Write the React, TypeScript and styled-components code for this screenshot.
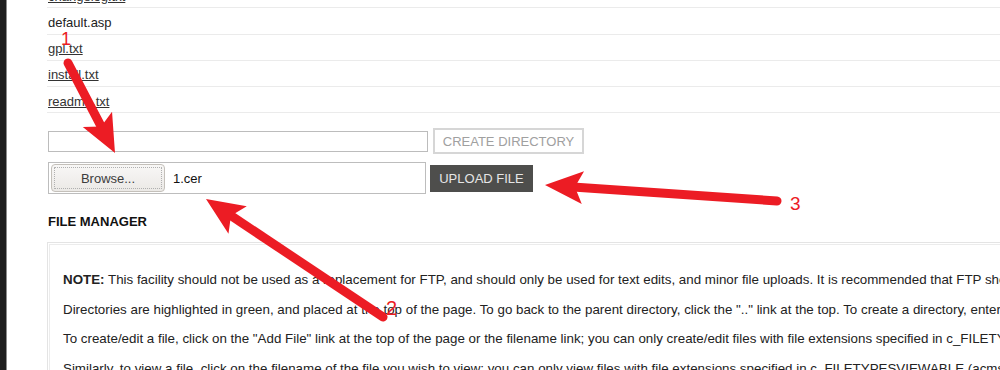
import React from "react";
import styled, { createGlobalStyle } from "styled-components";

const Global = createGlobalStyle`
  html, body { margin: 0; padding: 0; background: #fff; overflow: hidden; }
  body {
    font-family: "Liberation Sans", Arial, sans-serif;
    font-size: 13px;
    color: #222;
  }
`;

const Page = styled.div`
  position: relative;
  width: 1000px;
  height: 370px;
  overflow: hidden;
  display: flex;
  background: #fff;
`;

const Sidebar = styled.div`
  width: 6px;
  flex: none;
  background: #1e1e1e;
  border-right: 1px solid #8c8c8c;
`;

const Main = styled.div`
  flex: 1;
  min-width: 0;
  padding-left: 40px;
  margin-top: -18px;
  display: flex;
  flex-direction: column;
`;

const FileList = styled.div`
  display: flex;
  flex-direction: column;
`;

const FileRow = styled.div`
  height: 21.25px;
  padding-top: 4px;
  border-bottom: 1px solid #ebebeb;
  display: flex;
  align-items: center;
  padding-left: 1px;
  line-height: 16px;
`;

const FileLink = styled.a`
  color: #333;
  text-decoration: underline;
`;

const FileName = styled.span`
  color: #222;
`;

const FormRow = styled.div<{ $gap: number; $top: number; $h: number }>`
  display: flex;
  align-items: center;
  gap: ${(p) => p.$gap}px;
  margin-top: ${(p) => p.$top}px;
  height: ${(p) => p.$h}px;
`;

const DirInput = styled.div`
  width: 380px;
  height: 21px;
  box-sizing: border-box;
  border: 1px solid #bcbcbc;
  margin-left: 1px;
`;

const GhostButton = styled.button`
  width: 151px;
  height: 26px;
  box-sizing: border-box;
  border: 2px solid #d6d6d6;
  background: #fff;
  color: #a0a0a0;
  font-family: "Liberation Sans", Arial, sans-serif;
  font-size: 13px;
  padding: 0;
`;

const FileBox = styled.div`
  width: 378px;
  height: 32px;
  box-sizing: border-box;
  border: 1px solid #bdbdbd;
  margin-left: 1px;
  display: flex;
  align-items: center;
  padding: 1px 2px;
  gap: 8px;
`;

const BrowseButton = styled.div`
  width: 114px;
  height: 28px;
  box-sizing: border-box;
  border: 1px solid #c4c0ba;
  border-radius: 4px;
  background: linear-gradient(#f8f7f6, #ebe9e6);
  display: flex;
  align-items: center;
  justify-content: center;
  color: #3c3c3c;
  font-size: 13px;
  outline: 1px dotted #b0b0b0;
  outline-offset: -4px;
`;

const ChosenFile = styled.span`
  color: #111;
  font-size: 13px;
`;

const DarkButton = styled.button`
  width: 103px;
  height: 27px;
  border: none;
  background: #4e4e4c;
  color: #e6e6e6;
  font-family: "Liberation Sans", Arial, sans-serif;
  font-size: 13px;
  padding: 0;
`;

const Title = styled.h3`
  margin: 19.5px 0 0;
  padding-left: 1px;
  font-size: 13px;
  line-height: 16px;
  font-weight: bold;
  color: #111;
`;

const NoteBox = styled.div`
  margin-top: 12.5px;
  border: 1px solid #e4e4e4;
  border-right: none;
  padding: 1px 0 0 1px;
`;

const NoteInner = styled.div`
  border: 1px solid #ececec;
  border-right: none;
  padding: 27px 0 0 13px;
  white-space: nowrap;
`;

const Note = styled.p`
  margin: 0 0 13.5px;
  line-height: 16px;
  font-size: 13.35px;
  color: #222;
`;

const Overlay = styled.svg`
  position: absolute;
  left: 0;
  top: 0;
  width: 1000px;
  height: 370px;
  pointer-events: none;
`;

const RED = "#ec1c24";

type Pt = [number, number];

function Arrow({ tail, tip }: { tail: Pt; tip: Pt }) {
  const dx = tail[0] - tip[0];
  const dy = tail[1] - tip[1];
  const len = Math.hypot(dx, dy);
  const ux = dx / len;
  const uy = dy / len;
  const px = -uy;
  const py = ux;
  const headLen = 38;
  const half = 16.5;
  const notch = 30;
  const bx = tip[0] + ux * headLen;
  const by = tip[1] + uy * headLen;
  const nx = tip[0] + ux * notch;
  const ny = tip[1] + uy * notch;
  const pts = [
    [tip[0], tip[1]],
    [bx + px * half, by + py * half],
    [nx, ny],
    [bx - px * half, by - py * half],
  ]
    .map((p) => p.join(","))
    .join(" ");
  return (
    <g>
      <line
        x1={tail[0]}
        y1={tail[1]}
        x2={tip[0] + ux * (notch - 2)}
        y2={tip[1] + uy * (notch - 2)}
        stroke={RED}
        strokeWidth={9}
        strokeLinecap="round"
      />
      <polygon points={pts} fill={RED} />
    </g>
  );
}

export default function App() {
  return (
    <>
      <Global />
      <Page>
        <Sidebar />
        <Main>
          <FileList>
            <FileRow>
              <FileLink href="#">changelog.txt</FileLink>
            </FileRow>
            <FileRow>
              <FileName>default.asp</FileName>
            </FileRow>
            <FileRow>
              <FileLink href="#">gpl.txt</FileLink>
            </FileRow>
            <FileRow>
              <FileLink href="#">install.txt</FileLink>
            </FileRow>
            <FileRow>
              <FileLink href="#">readme.txt</FileLink>
            </FileRow>
          </FileList>

          <FormRow $gap={5} $top={15} $h={26}>
            <DirInput />
            <GhostButton>CREATE DIRECTORY</GhostButton>
          </FormRow>

          <FormRow $gap={4} $top={8} $h={32}>
            <FileBox>
              <BrowseButton>Browse...</BrowseButton>
              <ChosenFile>1.cer</ChosenFile>
            </FileBox>
            <DarkButton>UPLOAD FILE</DarkButton>
          </FormRow>

          <Title>FILE MANAGER</Title>

          <NoteBox>
            <NoteInner>
              <Note>
                <b>NOTE:</b> This facility should not be used as a replacement for FTP, and should only be used for text edits, and minor file uploads. It is recommended that FTP should be used for larger uploads.
              </Note>
              <Note>
                Directories are highlighted in green, and placed at the top of the page. To go back to the parent directory, click the ".." link at the top. To create a directory, enter the name in the box.
              </Note>
              <Note>
                To create/edit a file, click on the "Add File" link at the top of the page or the filename link; you can only create/edit files with file extensions specified in c_FILETYPESEDITABLE.
              </Note>
              <Note>
                Similarly, to view a file, click on the filename of the file you wish to view; you can only view files with file extensions specified in c_FILETYPESVIEWABLE (acmsi.asp).
              </Note>
            </NoteInner>
          </NoteBox>
        </Main>

        <Overlay viewBox="0 0 1000 370">
          <Arrow tail={[68, 63]} tip={[115, 153]} />
          <Arrow tail={[383, 317]} tip={[206, 199]} />
          <Arrow tail={[777, 201]} tip={[545, 185]} />
          <text x={61} y={45} fill={RED} fontFamily="Liberation Sans, Arial, sans-serif" fontSize={18}>1</text>
          <text x={386} y={315} fill={RED} fontFamily="Liberation Sans, Arial, sans-serif" fontSize={20}>2</text>
          <text x={790} y={210} fill={RED} fontFamily="Liberation Sans, Arial, sans-serif" fontSize={19}>3</text>
        </Overlay>
      </Page>
    </>
  );
}
